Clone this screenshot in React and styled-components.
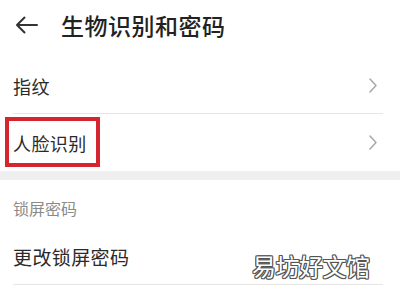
import React from "react";
import styled, { createGlobalStyle } from "styled-components";

const Global = createGlobalStyle`
  html, body { margin: 0; padding: 0; background: #fff; }
  body { font-family: "Noto Sans CJK SC", "Noto Sans", sans-serif; }
`;

const Screen = styled.div`
  position: relative;
  width: 400px;
  height: 300px;
  overflow: hidden;
  background: #fff;
`;

const Header = styled.div`
  display: flex;
  align-items: center;
  height: 50px;
  padding-left: 15px;
  gap: 23px;
`;

const Title = styled.div`
  font-size: 23px;
  line-height: 26px;
  font-weight: 500;
  color: #222;
  letter-spacing: 0.5px;
`;

const List = styled.div`
  margin-top: 8px;
`;

const Row = styled.div`
  display: flex;
  align-items: center;
  justify-content: space-between;
  height: ${(p) => p.$h}px;
  margin: 0 17px 0 13px;
  padding-right: 6px;
  box-sizing: border-box;
  border-bottom: ${(p) => (p.$divider ? "1px solid #e6e6e6" : "none")};
`;

const Label = styled.span`
  position: relative;
  font-size: ${(p) => p.$size || 18}px;
  line-height: 18px;
  color: #2a2a2a;
  letter-spacing: 0.4px;
  ${(p) =>
    p.$highlight &&
    `
    &::after {
      content: "";
      position: absolute;
      left: -8px;
      right: -13px;
      top: -17px;
      bottom: -15px;
      border: 4px solid #d52630;
    }
  `}
`;

const Band = styled.div`
  height: 9px;
  background: #efefef;
`;

const SectionTitle = styled.div`
  padding: 20px 13px 14px;
  font-size: 16px;
  line-height: 16px;
  color: #8a8a8a;
`;

const Watermark = styled.div`
  position: absolute;
  left: 252px;
  top: 251px;
  font-size: 24px;
  line-height: 30px;
  font-weight: 400;
  color: #fff;
  letter-spacing: -0.5px;
  text-shadow:
    1px 0 0 #555, -1px 0 0 #555, 0 1px 0 #555, 0 -1px 0 #555,
    1px 1px 0 #555, -1px -1px 0 #555, 1px -1px 0 #555, -1px 1px 0 #555;
`;

const BackArrow = () => (
  <svg width="23" height="18" viewBox="0 0 23 18" fill="none">
    <path d="M22 9H2M9.5 1.5L2 9l7.5 7.5" stroke="#333" strokeWidth="2" strokeLinecap="round" strokeLinejoin="round" />
  </svg>
);

const Chevron = () => (
  <svg width="8" height="15" viewBox="0 0 8 15" fill="none">
    <path d="M1 1l6 6.5L1 14" stroke="#a8a8a8" strokeWidth="1.5" strokeLinecap="round" strokeLinejoin="round" />
  </svg>
);

export default function App() {
  return (
    <Screen>
      <Global />
      <Header>
        <BackArrow />
        <Title>生物识别和密码</Title>
      </Header>
      <List>
        <Row $h={56} $divider>
          <Label>指纹</Label>
          <Chevron />
        </Row>
        <Row $h={57}>
          <Label $highlight>人脸识别</Label>
          <Chevron />
        </Row>
      </List>
      <Band />
      <SectionTitle>锁屏密码</SectionTitle>
      <Row $h={55} $divider>
        <Label $size={19}>更改锁屏密码</Label>
      </Row>
      <Watermark>易坊好文馆</Watermark>
    </Screen>
  );
}
